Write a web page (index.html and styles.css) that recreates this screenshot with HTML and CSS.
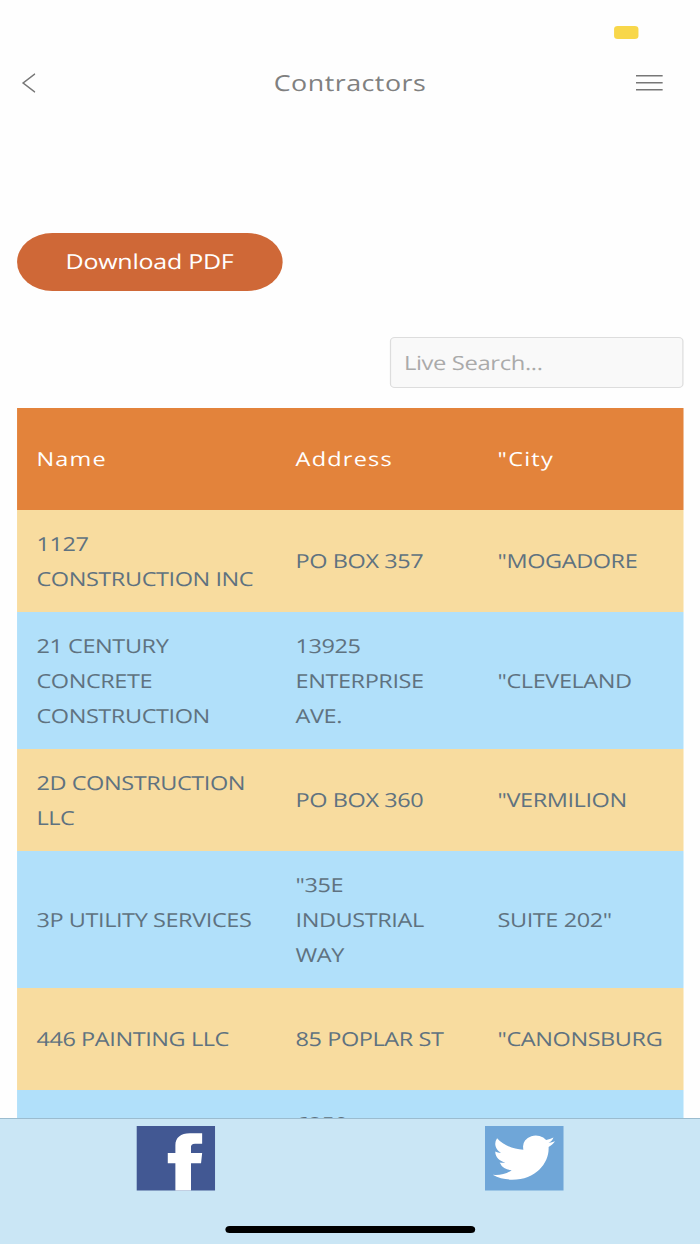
FILE: index.html
```html
<!DOCTYPE html>
<html lang="en">
<head>
    <meta charset="UTF-8">
    <meta name="viewport" content="width=device-width, initial-scale=1.0">
    <title>Contractors</title>
    <link rel="stylesheet" href="styles.css">
</head>
<body>

<div class="screen">
    <div class="status-bar"><span class="battery"></span></div>

    <header class="nav-bar">
        <svg class="back" viewBox="0 0 12 20" preserveAspectRatio="none"><path d="M11.3 .7 1 10l10.300 9.300"/></svg>
        <h1>Contractors</h1>
        <svg class="menu" viewBox="0 0 22 16" preserveAspectRatio="none"><path d="M0 .8h22M0 7.800h22M0 14.800h22"/></svg>
    </header>

    <main class="content">
        <button class="download">Download PDF</button>
        <div class="search-row">
            <input type="text" class="search" placeholder="Live Search...">
        </div>

        <table class="contractors">
            <thead>
                <tr>
                    <th>Name</th>
                    <th>Address</th>
                    <th>"City</th>
                </tr>
            </thead>
            <tbody>
                <tr>
                    <td>1127<br>CONSTRUCTION INC</td>
                    <td>PO BOX 357</td>
                    <td>"MOGADORE</td>
                </tr>
                <tr>
                    <td>21 CENTURY<br>CONCRETE<br>CONSTRUCTION</td>
                    <td>13925<br>ENTERPRISE<br>AVE.</td>
                    <td>"CLEVELAND</td>
                </tr>
                <tr>
                    <td>2D CONSTRUCTION<br>LLC</td>
                    <td>PO BOX 360</td>
                    <td>"VERMILION</td>
                </tr>
                <tr>
                    <td>3P UTILITY SERVICES</td>
                    <td>"35E<br>INDUSTRIAL<br>WAY</td>
                    <td>SUITE 202"</td>
                </tr>
                <tr>
                    <td>446 PAINTING LLC</td>
                    <td>85 POPLAR ST</td>
                    <td>"CANONSBURG</td>
                </tr>
                <tr class="last">
                    <td></td>
                    <td>6250</td>
                    <td></td>
                </tr>
            </tbody>
        </table>
    </main>

    <footer class="tab-bar">
        <div class="tabs">
            <svg class="social" viewBox="0 0 64 64">
                <rect width="64" height="64" fill="#425893"/>
                <path fill="#fff" d="M31.700 64V37h-6.200V26.700h6.200v-7.500C31.700 11.500 36 7.200 43.500 7.200h10v10.300h-5.800c-2.500 0-3.300 1.200-3.300 3.400v5.800h9.100L52.600 37h-8.200v27z"/>
            </svg>
            <svg class="social" viewBox="0 0 64 64">
                <rect width="64" height="64" fill="#6fa6d8"/>
                <path fill="#fff" transform="translate(6.300 3.100) scale(2.120 2.200)" d="M23.950 5.500c-.8.400-1.600.6-2.500.8.900-.6 1.600-1.400 1.900-2.500-.9.500-1.800.9-2.800 1.100A4.900 4.900 0 0 0 11.700 8.200q0 .6.100 1.100C7.700 9.100 4.100 7.100 1.700 4.100a4.900 4.900 0 0 0 1.500 6.600c-.8 0-1.600-.2-2.200-.6v.1c0 2.400 1.700 4.400 3.900 4.800a5 5 0 0 1-2.200.1 4.900 4.900 0 0 0 4.600 3.400A9.900 9.900 0 0 1 0 20.600a14 14 0 0 0 7.500 2.200c9.100 0 14-7.500 14-14v-.7c1-.7 1.800-1.500 2.450-2.600z"/>
            </svg>
        </div>
        <div class="home-indicator"></div>
    </footer>
</div>

</body>
</html>
```

FILE: styles.css
```css
* {
    box-sizing: border-box;
}

body {
    margin: 0;
    background-color: #fefefe;
    font-family: "Open Sans", "Noto Sans", sans-serif;
    text-rendering: geometricPrecision;
    overflow: hidden;
}

.screen {
    display: flex;
    flex-direction: column;
    width: 574.5px;
    height: 1244px;
    transform: scaleX(1.2184);
    transform-origin: 0 0;
}

.status-bar {
    display: flex;
    justify-content: flex-end;
    height: 60px;
    padding: 26px 51px 0 0;
}

.battery {
    width: 20px;
    height: 13px;
    border-radius: 3px;
    background-color: #f8d74a;
}

.nav-bar {
    display: grid;
    grid-template-columns: 1fr auto 1fr;
    align-items: center;
    height: 46px;
    padding: 0 17.5px;
}

.nav-bar h1 {
    margin: -1px 0 0;
    font-size: 22px;
    font-weight: 400;
    letter-spacing: 0.4px;
    color: #808080;
}

.nav-bar svg {
    fill: none;
    stroke: #777;
    stroke-width: 1.4;
}

.back {
    width: 11.5px;
    height: 20px;
}

.menu {
    justify-self: end;
    width: 22px;
    height: 16px;
    margin-right: 13px;
}

.content {
    flex: 1;
    min-height: 0;
    padding: 126.5px 13.5px 0;
    overflow: hidden;
}

.download {
    display: block;
    width: 218.5px;
    height: 58px;
    padding: 0;
    border: none;
    border-radius: 29px;
    background-color: #cf6837;
    color: #fff;
    font-family: inherit;
    font-size: 20.5px;
    letter-spacing: -0.2px;
    text-rendering: inherit;
}

.search-row {
    display: flex;
    justify-content: flex-end;
    margin: 46.5px 0 20.3px;
}

.search {
    width: 241.5px;
    height: 51px;
    padding: 0 11px;
    border: 1.5px solid #ddd;
    border-radius: 4px;
    background-color: #f9f9f9;
    font-family: inherit;
    font-size: 19.5px;
    letter-spacing: -0.3px;
    text-rendering: inherit;
}

.search::placeholder {
    color: #aaa;
}

.contractors, .contractors thead, .contractors tbody {
    display: block;
    width: 547.3px;
}

.contractors tr {
    display: grid;
    grid-template-columns: 212.7px 165.8px 1fr;
    align-items: center;
    min-height: 102px;
}

.contractors th, .contractors td {
    padding: 15.6px 0 16.4px 16.4px;
    text-align: left;
    white-space: nowrap;
    font-size: 19.3px;
    line-height: 35px;
}

.contractors thead tr {
    background-color: #e3833b;
}

.contractors th {
    color: #fff;
    font-weight: 500;
    letter-spacing: 1px;
}

.contractors td {
    color: #5f7280;
    letter-spacing: -0.35px;
}

.contractors tbody tr:nth-child(odd) {
    background-color: #f8dc9f;
}

.contractors tbody tr:nth-child(even) {
    background-color: #b1e0fa;
}

.contractors .last {
    align-items: start;
}

.tab-bar {
    display: flex;
    flex-direction: column;
    align-items: center;
    justify-content: space-between;
    height: 126px;
    padding: 7px 0 11px;
    border-top: 1px solid #9bbccf;
    background-color: #cae6f5;
}

.tabs {
    display: flex;
    justify-content: space-around;
    width: 572px;
}

.social {
    width: 64.5px;
    height: 64.5px;
}

.home-indicator {
    width: 205px;
    height: 7px;
    border-radius: 4px;
    background-color: #000;
}
```
